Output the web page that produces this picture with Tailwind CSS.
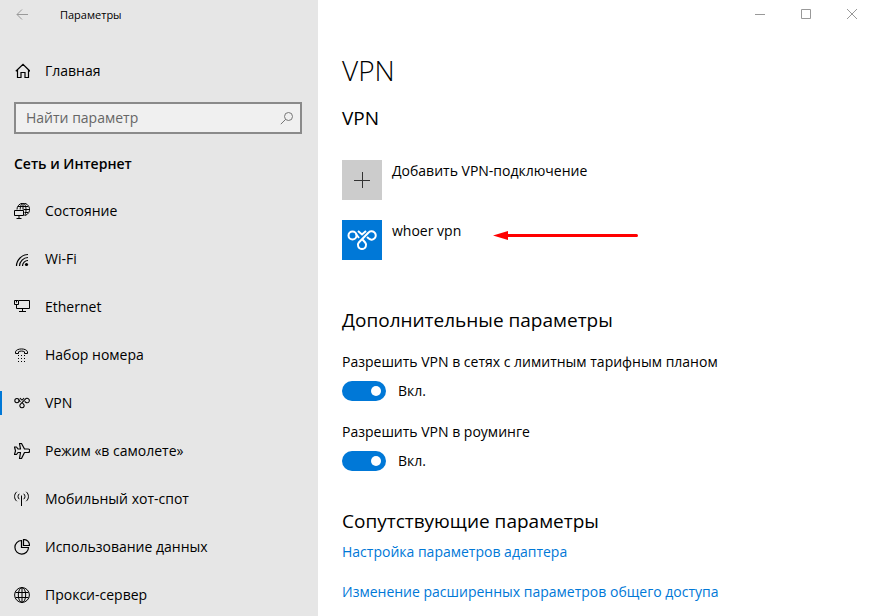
<!DOCTYPE html>
<html lang="ru">
<head>
  <meta charset="UTF-8">
  <meta name="viewport" content="width=device-width, initial-scale=1.0">
  <title>Параметры</title>
  <script src="https://cdn.jsdelivr.net/npm/@tailwindcss/browser@4"></script>
</head>
<body class="flex h-screen overflow-hidden bg-white font-['Open_Sans','Noto_Sans',sans-serif] text-sm text-black">

  <!-- Sidebar -->
  <aside class="w-[318px] shrink-0 bg-[#e6e6e6]">
    <div class="flex h-[30px] items-center pl-4">
      <button type="button" aria-label="Назад" class="text-[#999999]">
        <svg class="size-3" viewBox="0 0 12 12" fill="none" stroke="currentColor"><path d="M12 5.5H1M6 .5l-5 5 5 5"/></svg>
      </button>
      <span class="ml-8 text-[11px]">Параметры</span>
    </div>

    <a href="#" class="mt-[17px] flex h-12 items-center gap-[15px] pl-[14px]">
      <svg class="size-4" viewBox="0 0 16 16" fill="none" stroke="currentColor" stroke-width="1.2"><path d="M1.8 8.2 9 1.4l7 6.8M3.5 7v7.5H7V9.5h4v5h3.5V7"/></svg>
      Главная
    </a>

    <div class="mt-[7px] mr-4 ml-[14px] flex h-8 items-center border-2 border-[#8a8a8a] bg-[#f0f0f0] pr-[6px] pl-[10px]">
      <input type="text" aria-label="Найти параметр" placeholder="Найти параметр" class="min-w-0 flex-1 bg-transparent outline-none placeholder:text-[#666666]">
      <svg class="size-[14px] text-[#767676]" viewBox="0 0 14 14" fill="none" stroke="currentColor"><circle cx="8.5" cy="5.5" r="4"/><path d="M5.7 8.3.8 13.2"/></svg>
    </div>

    <h2 class="mt-[18px] ml-[14px] leading-6 font-semibold">Сеть и Интернет</h2>

    <nav class="mt-[11px]">
      <a href="#" class="flex h-12 items-center gap-[15px] pl-[14px]">
        <svg class="size-4" viewBox="0 0 16 16" fill="none" stroke="currentColor">
          <path d="M3 6.5a6.3 6.3 0 1 1 8 6M6.2 6.5C6.3 3 7.3.5 9 .5s3 2.600 3 6-.8 5-1.500 6M9 .5v6M4 3.500h10M9.500 6.500h5.500M10.500 9.500h3.500"/>
          <path d="M.5 7.5h9v5h-9zM5 12.500v3M2.500 15.500h5"/>
        </svg>
        Состояние
      </a>
      <a href="#" class="flex h-12 items-center gap-[15px] pl-[14px]">
        <svg class="size-4" viewBox="0 0 16 16" fill="none" stroke="currentColor" stroke-width="1.2">
          <path d="M2.5 15C2.5 9 8 3.500 14 3.500M5.500 15c0-4.500 4-8.500 8.500-8.500M8.500 15c0-3 2.500-5.500 5.500-5.500"/>
          <circle cx="12.5" cy="13.5" r="1.6" fill="currentColor" stroke="none"/>
        </svg>
        Wi-Fi
      </a>
      <a href="#" class="flex h-12 items-center gap-[15px] pl-[14px]">
        <svg class="size-4" viewBox="0 0 16 16" fill="none" stroke="currentColor">
          <path d="M5 1.5h10.500v8H2.500V6M.5 1.500h4v4h-4zM2.500 1.500v2M8.500 9.500v3M5 12.500h7"/>
        </svg>
        Ethernet
      </a>
      <a href="#" class="flex h-12 items-center gap-[15px] pl-[14px]">
        <svg class="size-4" viewBox="0 0 16 16" fill="none" stroke="currentColor">
          <path d="M1.5 6.500V4.800C2.500 1 12.500 1 13.500 4.800v1.700h-3V4.800c-1.500-1-4.500-1-6 0v1.700z"/>
          <path stroke-dasharray="1 2" d="M4 8.500h7M4 11.500h7M4 14.500h7"/>
        </svg>
        Набор номера
      </a>
      <a href="#" aria-current="page" class="flex h-12 items-center">
        <span class="h-6 w-[2px] bg-[#0078d7]"></span>
        <svg class="mr-[15px] ml-3 size-4" viewBox="0 0 30 20" fill="none" stroke="currentColor" stroke-width="2">
          <circle cx="5.500" cy="5.500" r="4"/>
          <path d="M9 4l3 4M11.800 12.500C10 14.500 11 19 15 19s5-4.500 3.200-6.500L15.500 9.500M11.800 12.500l9.500-9.700a4.200 4.200 0 1 1 .5 5.800L20 7M11 1l4 3.500L19 1"/>
        </svg>
        VPN
      </a>
      <a href="#" class="flex h-12 items-center gap-[15px] pl-[14px]">
        <svg class="size-4" viewBox="0 0 16 16" fill="none" stroke="currentColor" stroke-width="1.200" stroke-linejoin="round">
          <path d="M5.500.5h2L10.500 6h3.500a1.500 1.500 0 0 1 0 3.500h-3.500L7.500 15.500h-2L6.500 9.500H4L2.500 11.500h-2l1-3.700-1-3.800h2L4 6h2.500z"/>
        </svg>
        Режим «в самолете»
      </a>
      <a href="#" class="flex h-12 items-center gap-[15px] pl-[14px]">
        <svg class="size-4" viewBox="0 0 16 16" fill="none" stroke="currentColor">
          <path d="M7.500 4.500V15M2.800.8c-3 2.500-3 7 0 9.400M5.300 2.800c-1.700 1.500-1.700 4 0 5.400M12.200.8c3 2.500 3 7 0 9.400M9.700 2.800c1.700 1.500 1.700 4 0 5.400"/>
        </svg>
        Мобильный хот-спот
      </a>
      <a href="#" class="flex h-12 items-center gap-[15px] pl-[14px]">
        <svg class="size-4" viewBox="0 0 16 16" fill="none" stroke="currentColor" stroke-width="1.200">
          <path d="M7.500 1.500a6.800 6.800 0 1 0 7 7h-7zM9.500.5v6h6c0-3.500-2.500-6-6-6z"/>
        </svg>
        Использование данных
      </a>
      <a href="#" class="flex h-12 items-center gap-[15px] pl-[14px]">
        <svg class="size-4" viewBox="0 0 16 16" fill="none" stroke="currentColor">
          <circle cx="8" cy="8" r="7.400"/><ellipse cx="8" cy="8" rx="3.700" ry="7.400"/><path d="M8 .5v15M1.500 5.500h13M1.500 10.500h13"/>
        </svg>
        Прокси-сервер
      </a>
    </nav>
  </aside>

  <!-- Content -->
  <div class="min-w-0 flex-1">
    <div class="-mr-1 flex h-[28px] justify-end text-[#999999]">
      <button type="button" aria-label="Свернуть" class="flex w-[46px] items-center justify-center">
        <svg class="size-[10px]" viewBox="0 0 10 10" stroke="currentColor"><path d="M0 5.500h10"/></svg>
      </button>
      <button type="button" aria-label="Развернуть" class="flex w-[46px] items-center justify-center">
        <svg class="size-[10px]" viewBox="0 0 10 10" fill="none" stroke="currentColor"><path d="M.5.5h9v9h-9z"/></svg>
      </button>
      <button type="button" aria-label="Закрыть" class="flex w-[46px] items-center justify-center">
        <svg class="size-[10px]" viewBox="0 0 10 10" stroke="currentColor"><path d="m0 0 10 10M10 0 0 10"/></svg>
      </button>
    </div>

    <main class="px-6 pt-6">
      <h1 class="text-[28px] leading-9 font-light">VPN</h1>

      <section class="mt-4">
        <h2 class="text-[19px] leading-7">VPN</h2>
        <button type="button" class="mt-7 flex items-start gap-[10px] text-left">
          <span class="flex size-10 items-center justify-center bg-[#cccccc]">
            <svg class="size-4" viewBox="0 0 16 16" stroke="#333333"><path d="M0 8.500h16M8.500 0v16"/></svg>
          </span>
          <span class="leading-[22px]">Добавить VPN-подключение</span>
        </button>
        <div class="mt-5 flex items-start">
          <button type="button" class="flex items-start gap-[10px] text-left">
            <span class="flex size-10 items-center justify-center bg-[#0078d7]">
              <svg class="h-5 w-[30px]" viewBox="0 0 30 20" fill="none" stroke="#ffffff" stroke-width="2">
                <circle cx="5.500" cy="5.500" r="4"/>
                <path d="M9 4l3 4M11.800 12.500C10 14.500 11 19 15 19s5-4.500 3.200-6.500L15.500 9.500M11.800 12.500l9.500-9.700a4.200 4.200 0 1 1 .5 5.800L20 7M11 1l4 3.500L19 1"/>
              </svg>
            </span>
            <span class="leading-[22px]">whoer vpn</span>
          </button>
          <svg class="mt-[10px] ml-8 h-3 w-[145px]" viewBox="0 0 145 12">
            <path d="M14 5.500h129.500" stroke="#ff0000" stroke-width="3" stroke-linecap="round"/>
            <path d="M0 5.500 15 1v9z" fill="#ff0000"/>
          </svg>
        </div>
      </section>

      <section class="mt-[46px]">
        <h2 class="text-[19px] leading-7">Дополнительные параметры</h2>
        <p id="metered" class="mt-[18px] leading-5">Разрешить VPN в сетях с лимитным тарифным планом</p>
        <label class="mt-[9px] flex h-5 items-center gap-3">
          <input type="checkbox" role="switch" checked aria-describedby="metered" class="flex h-5 w-11 appearance-none items-center rounded-full bg-[#767676] px-[5px] before:size-[10px] before:rounded-full before:bg-white checked:justify-end checked:bg-[#0078d7]">
          Вкл.
        </label>
        <p id="roaming" class="mt-[21px] leading-5">Разрешить VPN в роуминге</p>
        <label class="mt-[9px] flex h-5 items-center gap-3">
          <input type="checkbox" role="switch" checked aria-describedby="roaming" class="flex h-5 w-11 appearance-none items-center rounded-full bg-[#767676] px-[5px] before:size-[10px] before:rounded-full before:bg-white checked:justify-end checked:bg-[#0078d7]">
          Вкл.
        </label>
      </section>

      <section class="mt-9">
        <h2 class="text-[19px] leading-7">Сопутствующие параметры</h2>
        <a href="#" class="mt-[7px] block leading-5 text-[#0078d7]">Настройка параметров адаптера</a>
        <a href="#" class="mt-5 block leading-5 text-[#0078d7]">Изменение расширенных параметров общего доступа</a>
      </section>
    </main>
  </div>

</body>
</html>
